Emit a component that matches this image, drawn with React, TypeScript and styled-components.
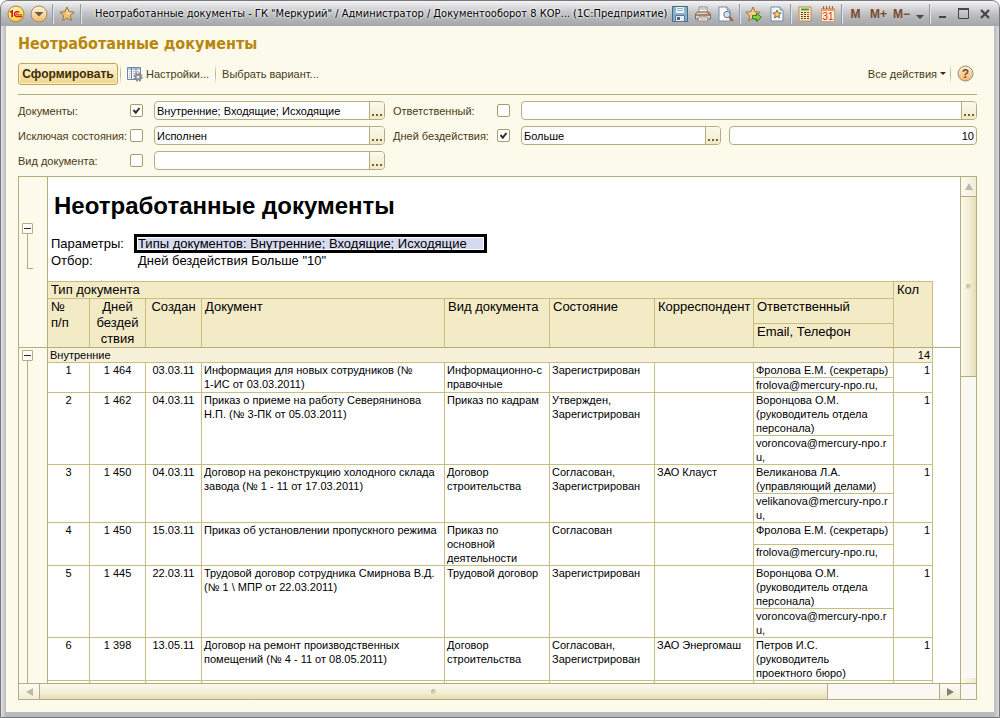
import React from "react";
import styled, { createGlobalStyle, css } from "styled-components";

const ui = '"Liberation Sans", Arial, sans-serif';
const tahoma = '"DejaVu Sans Condensed", "DejaVu Sans", Tahoma, sans-serif';

const color = {
  page: "#fcfaeb",
  line: "#b5ac80",
  grid: "#c9bd80",
  head: "#f3ebc6",
  group: "#f7f1da",
  label: "#4a3a12",
};

const GlobalStyle = createGlobalStyle`
  *, *::before, *::after { box-sizing: border-box; }
  body { margin: 0; background: #fff; font-family: ${ui}; font-size: 11px; color: #000; }
  button, input { font: inherit; color: inherit; margin: 0; }
  h1, h2 { margin: 0; }
`;

/* ---------- window frame ---------- */

const Window = styled.div`
  display: flex;
  flex-direction: column;
  height: 100vh;
  min-height: 480px;
  padding: 0 5px 5px;
  border: 1px solid #77787b;
  border-radius: 8px 8px 0 0;
  background: linear-gradient(90deg, #e2e2e4, #b9babd 5px, #b9babd calc(100% - 5px), #d8d8da);
  overflow: hidden;
`;

const TitleBar = styled.header`
  display: flex;
  flex: none;
  align-items: center;
  height: 25px;
  margin: 0 -5px;
  padding: 0 4px 0 3px;
  background: linear-gradient(#f4f4f5, #dcdcde 6px, #c3c4c6 12px, #b2b3b6 18px, #a6a7aa);
`;

const TitleText = styled.div`
  flex: 1;
  min-width: 0;
  padding-left: 12px;
  overflow: hidden;
  white-space: nowrap;
  font-family: ${tahoma};
  font-size: 11px;
  line-height: 16px;
  text-shadow: 0 0 3px #fff, 0 0 3px #fff;
`;

const BarButton = styled.button<{ $w?: number }>`
  display: flex;
  flex: none;
  align-items: center;
  justify-content: center;
  width: ${(p) => p.$w ?? 23}px;
  height: 22px;
  padding: 0;
  border: 0;
  background: none;
  font-weight: bold;
  font-size: 12px;
  color: #7a4a2a;
  svg { display: block; }
`;

const BarDivider = styled.span`
  flex: none;
  width: 5px;
  height: 20px;
  background: linear-gradient(90deg, transparent 2px, #97989b 2px, #97989b 3px, #e4e4e6 3px, #e4e4e6 4px, transparent 4px);
`;

const Content = styled.main`
  display: flex;
  flex: 1;
  flex-direction: column;
  min-height: 0;
  padding: 8px 17px 12px 12px;
  background: ${color.page};
`;

const PageTitle = styled.h1`
  font-family: ${tahoma};
  font-size: 16px;
  line-height: 20px;
  color: #b8860b;
`;

/* ---------- command bar ---------- */

const Toolbar = styled.div`
  display: flex;
  align-items: center;
  height: 41px;
  padding-bottom: 1px;
  border-bottom: 1px solid ${color.line};
  color: ${color.label};
`;

const PrimaryButton = styled.button`
  width: 100px;
  height: 22px;
  padding: 0;
  border: 1px solid #c8a452;
  border-radius: 3px;
  background: linear-gradient(#fdf6df, #f8e6b4 50%, #efd488);
  box-shadow: inset 0 0 0 1px #fbefcd;
  font-size: 12px;
  font-weight: bold;
  color: #3c2d08;
`;

const ToolButton = styled.button`
  display: flex;
  align-items: center;
  gap: 3px;
  height: 22px;
  padding: 0 6px;
  border: 0;
  background: none;
  white-space: nowrap;
`;

const ActionsButton = styled(ToolButton)`
  padding-right: 4px;
`;

const HelpButton = styled(ToolButton)`
  padding-right: 3px;
`;

const ToolDivider = styled.span<{ $gap?: number }>`
  width: 1px;
  height: 20px;
  margin-left: ${(p) => p.$gap ?? 0}px;
  background: linear-gradient(transparent, ${color.line}, transparent);
`;

const Spacer = styled.span`
  flex: 1;
`;

/* ---------- filters ---------- */

const Filters = styled.form`
  display: grid;
  grid-template-columns: 112px 24px minmax(0, 231fr) 112px 24px minmax(0, 456fr);
  grid-auto-rows: 19px;
  row-gap: 6px;
  align-items: center;
  margin: 6px 0;
`;

const FilterLabel = styled.label<{ $second?: boolean }>`
  padding-left: ${(p) => (p.$second ? 8 : 0)}px;
  white-space: nowrap;
  color: ${color.label};
`;

const CheckWrap = styled.span`
  display: grid;
  width: 13px;
  height: 13px;
  > * { grid-area: 1 / 1; }
  svg { pointer-events: none; visibility: hidden; }
  input:checked + svg { visibility: visible; }
`;

const CheckInput = styled.input`
  appearance: none;
  width: 13px;
  height: 13px;
  border: 1px solid #a79c6c;
  border-radius: 2px;
  background: #fff;
`;

const Field = styled.div`
  display: flex;
  height: 19px;
  border: 1px solid ${color.line};
  border-radius: 4px;
  background: #fff;
  overflow: hidden;
`;

const FieldInput = styled.input<{ $right?: boolean }>`
  flex: 1;
  min-width: 0;
  width: 100%;
  padding: 0 2px;
  border: 0;
  outline: 0;
  background: none;
  text-align: ${(p) => (p.$right ? "right" : "left")};
`;

const PickButton = styled.button`
  display: flex;
  flex: none;
  align-items: flex-end;
  justify-content: center;
  width: 15px;
  padding: 0 0 3px;
  border: 0;
  border-left: 1px solid ${color.line};
  background: linear-gradient(#fcfaee, #f0eacb);
`;

const FieldPair = styled.div`
  display: grid;
  grid-template-columns: minmax(0, 200fr) minmax(0, 248fr);
  gap: 8px;
`;

/* ---------- report ---------- */

const Report = styled.section`
  display: grid;
  flex: 1;
  grid-template-columns: minmax(0, 1fr) 16px;
  grid-template-rows: minmax(0, 1fr) 16px;
  min-height: 0;
  border: 1px solid ${color.line};
  background: #fff;
`;

const Panes = styled.div`
  display: flex;
  flex-direction: column;
  min-width: 0;
  min-height: 0;
  overflow: hidden;
`;

const Pane = styled.div<{ $fixed?: boolean }>`
  display: flex;
  flex: ${(p) => (p.$fixed ? "none" : "1")};
  min-height: 0;
  overflow: hidden;
  border-bottom: ${(p) => (p.$fixed ? `1px solid ${color.line}` : "0")};
`;

const Gutter = styled.div<{ $top: number }>`
  display: flex;
  flex: none;
  flex-direction: column;
  width: 29px;
  padding: ${(p) => p.$top}px 0 0 3px;
  border-right: 1px solid ${color.line};
  background: ${color.page};
`;

const FoldButton = styled.button`
  display: grid;
  place-items: center;
  flex: none;
  width: 11px;
  height: 11px;
  padding: 0;
  border: 1px solid ${color.line};
  border-radius: 1px;
  background: #fffef8;
`;

const FoldMark = styled.span`
  width: 7px;
  height: 1px;
  background: #3c2d08;
`;

const FoldLine = styled.span<{ $h?: number }>`
  width: 6px;
  margin-left: 5px;
  border-left: 1px solid ${color.line};
  ${(p) =>
    p.$h
      ? css`
          height: ${p.$h}px;
          border-bottom: 1px solid ${color.line};
        `
      : css`
          flex: 1;
        `}
`;

const Sheet = styled.div`
  flex: 1;
  min-width: 0;
  overflow: hidden;
`;

const SheetTitle = styled.h2`
  padding: 14px 0 0 6px;
  font-size: 24px;
  line-height: 30px;
`;

const Params = styled.dl`
  display: grid;
  grid-template-columns: 84px auto;
  justify-content: start;
  margin: 14px 0 12px;
  padding-left: 3px;
  font-size: 13px;
  line-height: 17px;
  white-space: nowrap;
  dt, dd { margin: 0; }
  dd { padding-left: 3px; }
`;

const SelectedCell = styled.dd`
  width: 351px;
  background: #d6daf0;
  box-shadow: 0 0 0 1px #000, inset 0 0 0 2px #000, inset 0 0 0 3px #fff;
`;

const Table = styled.table`
  width: 885px;
  table-layout: fixed;
  border-collapse: separate;
  border-spacing: 0;
  line-height: 14px;
`;

type CellProps = { $align?: "left" | "center" | "right"; $last?: boolean };

const HeadCell = styled.th<CellProps & { $h?: number }>`
  height: ${(p) => (p.$h ? `${p.$h}px` : "auto")};
  padding: 0 3px;
  border: solid ${color.grid};
  border-width: 0 1px ${(p) => (p.$last ? 0 : 1)}px 0;
  background: ${color.head};
  font-size: 13px;
  font-weight: normal;
  line-height: 16px;
  text-align: ${(p) => p.$align ?? "left"};
  vertical-align: top;
  white-space: pre;
`;

const HeadTable = styled(Table)`
  border-top: 1px solid ${color.grid};
`;

const Cell = styled.td<CellProps>`
  height: 15px;
  padding: 0 2px;
  border: solid ${color.grid};
  border-width: 0 1px 1px 0;
  text-align: ${(p) => p.$align ?? "left"};
  vertical-align: top;
  white-space: pre;
`;

const GroupCell = styled(Cell)`
  background: ${color.group};
`;

/* ---------- scroll bars ---------- */

const VBar = styled.div`
  display: flex;
  flex-direction: column;
  border-left: 1px solid ${color.line};
  background: #faf8f3;
`;

const HBar = styled.div`
  display: flex;
  border-top: 1px solid ${color.line};
  background: #faf8f3;
`;

const BarCorner = styled.div`
  border: solid ${color.line};
  border-width: 1px 0 0 1px;
  background: #faf8f3;
`;

const vFill = "linear-gradient(90deg, #fbf9ec, #f2edd2 60%, #e3dcb6)";
const hFill = "linear-gradient(#fbf9ec, #f2edd2 60%, #e3dcb6)";

const VStep = styled.button`
  display: grid;
  place-items: center;
  flex: none;
  height: 20px;
  padding: 0;
  border: 0;
  border-bottom: 1px solid ${color.line};
  background: linear-gradient(90deg, #fdfcf4, #f0ecd6);
`;

const VEnd = styled.span`
  flex: none;
  height: 5px;
  background: linear-gradient(90deg, #faf8ec, #efe9cd);
`;

const VThumb = styled.div`
  display: grid;
  place-items: center;
  flex: 179 0 0;
  border-bottom: 1px solid ${color.line};
  background: ${vFill};
`;

const HStep = styled.button<{ $end?: boolean }>`
  display: grid;
  place-items: center;
  flex: none;
  width: 21px;
  padding: 0;
  border: solid ${color.line};
  border-width: ${(p) => (p.$end ? "0 0 0 1px" : "0 1px 0 0")};
  background: linear-gradient(#fdfcf4, #f0ecd6);
`;

const HThumb = styled.div`
  display: grid;
  place-items: center;
  flex: 788 0 0;
  border-right: 1px solid ${color.line};
  background: ${hFill};
`;

const Track = styled.div<{ $grow: number }>`
  flex: ${(p) => p.$grow} 0 0;
`;

const Grip = styled.span`
  width: 5px;
  height: 5px;
  border-radius: 3px;
  background: linear-gradient(135deg, #b5ad88, #efe9cd);
`;

/* ---------- icons ---------- */

const STAR = "M8 1l2.1 4.7 5 .5-3.8 3.4 1.1 5L8 12l-4.4 2.6 1.1-5L.9 6.2l5-.5z";

const LogoIcon = () => (
  <svg width="18" height="18" viewBox="0 0 18 18">
    <defs>
      <radialGradient id="logo" cx=".4" cy=".3" r=".8">
        <stop offset="0" stopColor="#fffbd0" />
        <stop offset=".6" stopColor="#fbe25a" />
        <stop offset="1" stopColor="#e0a81c" />
      </radialGradient>
    </defs>
    <circle cx="9" cy="9" r="8" fill="url(#logo)" stroke="#a98a3e" />
    <path d="M3 7.300L5.200 6v6.200" fill="none" stroke="#d8171b" strokeWidth="1.700" />
    <path d="M12.300 7.600A2.600 2.600 0 1 0 9.800 11.600H15" fill="none" stroke="#d8171b" strokeWidth="1.500" />
    <path d="M10.800 8.300a.9.9 0 1 0-.8 1.500H15" fill="none" stroke="#d8171b" strokeWidth=".9" />
  </svg>
);

const MenuIcon = () => (
  <svg width="18" height="18" viewBox="0 0 18 18">
    <defs>
      <linearGradient id="menu" x2="0" y2="1">
        <stop offset="0" stopColor="#fdf3e2" />
        <stop offset=".5" stopColor="#f8d9a4" />
        <stop offset="1" stopColor="#f0b95c" />
      </linearGradient>
    </defs>
    <circle cx="9" cy="9" r="8" fill="url(#menu)" stroke="#a68a62" />
    <path d="M4.500 7h9L9 11.500z" fill="#6c5a44" />
  </svg>
);

const StarIcon = () => (
  <svg width="16" height="16" viewBox="0 0 16 16">
    <path d={STAR} fill="#f7c070" stroke="#8f7450" strokeLinejoin="round" />
    <path d="M8 3.500l1.300 3 3.200.4L8 8.500z" fill="#fde7bd" />
  </svg>
);

const SaveIcon = () => (
  <svg width="16" height="16" viewBox="0 0 16 16">
    <path d="M.5.500h15v15H.5z" fill="#8fb1c6" stroke="#42698a" />
    <path d="M4 1h8v6H4z" fill="#f2f6f9" />
    <path d="M5 2.500h6M5 4.500h6" stroke="#8fb0c6" />
    <path d="M3.500 9.500h9v6h-9z" fill="#e6eef3" stroke="#54799a" />
    <path d="M5 11h3v3H5z" fill="#42698a" />
  </svg>
);

const PrintIcon = () => (
  <svg width="16" height="16" viewBox="0 0 16 16">
    <path d="M4 1h8v5H4z" fill="#fff" stroke="#8b8b8b" />
    <path d="M2 6h12l1.500 2v5H.5V8z" fill="#d9d2c8" stroke="#77706a" />
    <path d="M1 9h14" stroke="#9a6a4a" strokeWidth="1.500" />
    <path d="M4 11h8l1 4H3z" fill="#fdfdfd" stroke="#8b8b8b" />
    <path d="M5 3h6M5 13h6" stroke="#bf8c68" />
    <path d="M12.500 7.500h1.500" stroke="#cc3a2a" />
  </svg>
);

const PreviewIcon = () => (
  <svg width="16" height="16" viewBox="0 0 16 16">
    <path d="M1 1h8l3 3v11H1z" fill="#fbfdff" stroke="#6f8fa8" />
    <path d="M9 1v3h3" fill="#cfdde8" stroke="#6f8fa8" />
    <circle cx="9" cy="8.500" r="3.200" fill="#cfe4f4" stroke="#7a6a62" />
    <path d="M11.300 11l3.500 4" stroke="#a4623a" strokeWidth="2.200" />
  </svg>
);

const AddFavoriteIcon = () => (
  <svg width="17" height="16" viewBox="0 0 17 16">
    <path d={STAR} fill="#f9cd85" stroke="#94764a" strokeLinejoin="round" />
    <path d="M7.500 9.500h4v-2.500l5 4.300-5 4.200V13h-4z" fill="#7fd03c" stroke="#3d7a1e" />
  </svg>
);

const FavoritesIcon = () => (
  <svg width="14" height="16" viewBox="0 0 14 16">
    <path d="M1 1h9l3 3v11H1z" fill="#f3f8fb" stroke="#6f8fa8" />
    <path d="M10 1v3h3" fill="#cfdde8" stroke="#6f8fa8" />
    <path d="M7 4l1.200 2.700 3 .3-2.300 2 .7 2.900L7 10.400l-2.600 1.500.7-2.900-2.300-2 3-.3z" fill="#f5c878" stroke="#7a5c34" strokeWidth=".9" />
  </svg>
);

const CalcIcon = () => (
  <svg width="14" height="16" viewBox="0 0 14 16">
    <path d="M1 1h12v14H1z" fill="#fbe9c0" stroke="#c08a4e" />
    <path d="M3 2.500h8v2H3z" fill="#4c9a35" />
    <path d="M3 6.500h2M6 6.500h2M3 8.500h2M6 8.500h2M3 10.500h2M6 10.500h2M3 12.500h2M6 12.500h2" stroke="#5a3a26" />
    <path d="M9 6.500h2M9 8.500h2" stroke="#cf3a22" />
    <path d="M9 10.500h2M9 12.500h2" stroke="#5a3a26" />
  </svg>
);

const CalendarIcon = () => (
  <svg width="14" height="16" viewBox="0 0 14 16">
    <path d="M.5 2.500h13v13H.5z" fill="#fdf0d6" stroke="#d8a060" />
    <path d="M1 2h12v3H1z" fill="#e8a068" />
    <path d="M2.500 0v3M5.500 0v3M8.500 0v3M11.500 0v3" stroke="#a9623a" />
    <text x="7" y="14" textAnchor="middle" fontFamily="Liberation Sans" fontWeight="normal" fontSize="10" fill="#d6281c">
      31
    </text>
  </svg>
);

const SettingsIcon = () => (
  <svg width="16" height="16" viewBox="0 0 16 16">
    <path d="M.5 1.500h13v12H.5z" fill="#fff" stroke="#6e87a3" />
    <path d="M1 2h12v2H1z" fill="#b4c6da" />
    <path d="M4.500 2v11M9 2v11" stroke="#6e87a3" />
    <path d="M2 5.500h1.500M2 7.500h1.500M2 9.500h1.500M2 11.500h1.500M6 5.500h2M6 7.500h2M10 5.500h2" stroke="#a9bace" />
    <circle cx="11" cy="11" r="3.600" fill="none" stroke="#85858c" strokeWidth="2.200" strokeDasharray="1.700 1.120" />
    <circle cx="11" cy="11" r="2.400" fill="#e4e4e8" stroke="#8c8c93" strokeWidth="1.600" />
  </svg>
);

const HelpIcon = () => (
  <svg width="17" height="17" viewBox="0 0 17 17">
    <defs>
      <linearGradient id="help" x2="0" y2="1">
        <stop offset="0" stopColor="#fdf0dc" />
        <stop offset="1" stopColor="#f3b668" />
      </linearGradient>
    </defs>
    <circle cx="8.500" cy="8.500" r="7.500" fill="url(#help)" stroke="#9c8a74" />
    <text x="8.500" y="13" textAnchor="middle" fontFamily="Liberation Sans" fontWeight="bold" fontSize="12" fill="#75492a">
      ?
    </text>
  </svg>
);

const Triangle = ({ d, fill = "#3c2d08", w, h }: { d: string; fill?: string; w: number; h: number }) => (
  <svg width={w} height={h} viewBox={`0 0 ${w} ${h}`}>
    <path d={d} fill={fill} />
  </svg>
);

const Dots = () => (
  <svg width="10" height="2" viewBox="0 0 10 2">
    <path d="M0 0h2v2H0zM4 0h2v2H4zM8 0h2v2H8z" fill="#7a651c" />
  </svg>
);

/* ---------- data ---------- */

const COLUMNS = [42, 56, 56, 243, 105, 105, 99, 140, 39];

type Doc = {
  n: string;
  days: string;
  created: string;
  title: string;
  kind: string;
  state: string;
  partner?: string;
  owner: string;
  email?: string;
};

const DOCS: Doc[] = [
  { n: "1", days: "1 464", created: "03.03.11", title: "Информация для новых сотрудников (№\n1-ИС от 03.03.2011)", kind: "Информационно-с\nправочные", state: "Зарегистрирован", owner: "Фролова Е.М. (секретарь)", email: "frolova@mercury-npo.ru," },
  { n: "2", days: "1 462", created: "04.03.11", title: "Приказ о приеме на работу Северянинова\nН.П. (№ 3-ПК от 05.03.2011)", kind: "Приказ по кадрам", state: "Утвержден,\nЗарегистрирован", owner: "Воронцова О.М.\n(руководитель отдела\nперсонала)", email: "voroncova@mercury-npo.r\nu," },
  { n: "3", days: "1 450", created: "04.03.11", title: "Договор на реконструкцию холодного склада\nзавода (№ 1 - 11 от 17.03.2011)", kind: "Договор\nстроительства", state: "Согласован,\nЗарегистрирован", partner: "ЗАО Клауст", owner: "Великанова Л.А.\n(управляющий делами)", email: "velikanova@mercury-npo.r\nu," },
  { n: "4", days: "1 450", created: "15.03.11", title: "Приказ об установлении пропускного режима", kind: "Приказ по\nосновной\nдеятельности", state: "Согласован", owner: "Фролова Е.М. (секретарь)", email: "frolova@mercury-npo.ru," },
  { n: "5", days: "1 445", created: "22.03.11", title: "Трудовой договор сотрудника Смирнова В.Д.\n(№ 1 \\ МПР от 22.03.2011)", kind: "Трудовой договор", state: "Зарегистрирован", owner: "Воронцова О.М.\n(руководитель отдела\nперсонала)", email: "voroncova@mercury-npo.r\nu," },
  { n: "6", days: "1 398", created: "13.05.11", title: "Договор на ремонт производственных\nпомещений (№ 4 - 11 от 08.05.2011)", kind: "Договор\nстроительства", state: "Согласован,\nЗарегистрирован", partner: "ЗАО Энергомаш", owner: "Петров И.С.\n(руководитель\nпроектного бюро)" },
];

const Columns = () => (
  <colgroup>
    {COLUMNS.map((w, i) => (
      <col key={i} width={w} />
    ))}
  </colgroup>
);

const Check = ({ id, checked = false }: { id: string; checked?: boolean }) => (
  <CheckWrap>
    <CheckInput type="checkbox" id={id} defaultChecked={checked} />
    <svg width="13" height="13" viewBox="0 0 13 13">
      <path d="M3.500 6l2.300 2.700L9.500 4" fill="none" stroke="#33302a" strokeWidth="2" />
    </svg>
  </CheckWrap>
);

const PickField = ({ label, value = "" }: { label: string; value?: string }) => (
  <Field>
    <FieldInput type="text" aria-label={label} defaultValue={value} />
    <PickButton type="button" aria-label={`Выбрать: ${label}`}>
      <Dots />
    </PickButton>
  </Field>
);

const DocRows = ({ doc }: { doc: Doc }) => {
  const span = doc.email ? 2 : 1;
  return (
    <>
      <tr>
        <Cell rowSpan={span} $align="center">{doc.n}</Cell>
        <Cell rowSpan={span} $align="center">{doc.days}</Cell>
        <Cell rowSpan={span} $align="center">{doc.created}</Cell>
        <Cell rowSpan={span}>{doc.title}</Cell>
        <Cell rowSpan={span}>{doc.kind}</Cell>
        <Cell rowSpan={span}>{doc.state}</Cell>
        <Cell rowSpan={span}>{doc.partner}</Cell>
        <Cell>{doc.owner}</Cell>
        <Cell rowSpan={span} $align="right">1</Cell>
      </tr>
      {doc.email && (
        <tr>
          <Cell>{doc.email}</Cell>
        </tr>
      )}
    </>
  );
};

export default function App() {
  return (
    <>
      <GlobalStyle />
      <Window>
        <TitleBar>
          <BarButton aria-label="1С"><LogoIcon /></BarButton>
          <BarButton aria-label="Меню"><MenuIcon /></BarButton>
          <BarDivider />
          <BarButton aria-label="Избранное"><StarIcon /></BarButton>
          <BarDivider />
          <TitleText>Неотработанные документы - ГК "Меркурий" / Администратор / Документооборот 8 КОР... (1С:Предприятие)</TitleText>
          <BarButton aria-label="Сохранить"><SaveIcon /></BarButton>
          <BarButton aria-label="Печать"><PrintIcon /></BarButton>
          <BarButton aria-label="Просмотр"><PreviewIcon /></BarButton>
          <BarDivider />
          <BarButton aria-label="Добавить в избранное"><AddFavoriteIcon /></BarButton>
          <BarButton aria-label="Список избранного"><FavoritesIcon /></BarButton>
          <BarDivider />
          <BarButton aria-label="Калькулятор"><CalcIcon /></BarButton>
          <BarButton aria-label="Календарь"><CalendarIcon /></BarButton>
          <BarDivider />
          <BarButton>M</BarButton>
          <BarButton>M+</BarButton>
          <BarButton>M−</BarButton>
          <BarButton $w={14} aria-label="Ещё">
            <svg width="8" height="12" viewBox="0 0 8 12"><path d="M0 7h8L4 11z" fill="#444547" /></svg>
          </BarButton>
          <BarDivider />
          <BarButton $w={21} aria-label="Свернуть">
            <svg width="11" height="11" viewBox="0 0 11 11"><path d="M2 8h7v2H2z" fill="#444547" /></svg>
          </BarButton>
          <BarButton $w={21} aria-label="Развернуть">
            <svg width="11" height="11" viewBox="0 0 11 11"><path d="M.5 1.500h10v9H.5z" fill="none" stroke="#444547" /><path d="M0 1h11" stroke="#444547" strokeWidth="2" /></svg>
          </BarButton>
          <BarButton $w={21} aria-label="Закрыть">
            <svg width="10" height="10" viewBox="0 0 10 10"><path d="M1 1l8 8M9 1l-8 8" stroke="#444547" strokeWidth="2.200" /></svg>
          </BarButton>
        </TitleBar>

        <Content>
          <PageTitle>Неотработанные документы</PageTitle>
          <Toolbar>
            <PrimaryButton>Сформировать</PrimaryButton>
            <ToolDivider $gap={2} />
            <ToolButton><SettingsIcon />Настройки...</ToolButton>
            <ToolDivider />
            <ToolButton>Выбрать вариант...</ToolButton>
            <Spacer />
            <ActionsButton>Все действия <Triangle d="M0 0h6L3 3z" w={6} h={3} /></ActionsButton>
            <ToolDivider />
            <HelpButton aria-label="Справка"><HelpIcon /></HelpButton>
          </Toolbar>

          <Filters>
            <FilterLabel htmlFor="f-docs">Документы:</FilterLabel>
            <Check id="f-docs" checked />
            <PickField label="Документы" value="Внутренние; Входящие; Исходящие" />
            <FilterLabel htmlFor="f-owner" $second>Ответственный:</FilterLabel>
            <Check id="f-owner" />
            <PickField label="Ответственный" />

            <FilterLabel htmlFor="f-state">Исключая состояния:</FilterLabel>
            <Check id="f-state" />
            <PickField label="Исключая состояния" value="Исполнен" />
            <FilterLabel htmlFor="f-idle" $second>Дней бездействия:</FilterLabel>
            <Check id="f-idle" checked />
            <FieldPair>
              <PickField label="Дней бездействия" value="Больше" />
              <Field>
                <FieldInput type="text" aria-label="Количество дней" defaultValue="10" $right />
              </Field>
            </FieldPair>

            <FilterLabel htmlFor="f-kind">Вид документа:</FilterLabel>
            <Check id="f-kind" />
            <PickField label="Вид документа" />
          </Filters>

          <Report>
            <Panes>
              <Pane $fixed>
                <Gutter $top={46}>
                  <FoldButton aria-label="Свернуть"><FoldMark /></FoldButton>
                  <FoldLine $h={35} />
                </Gutter>
                <Sheet>
                  <SheetTitle>Неотработанные документы</SheetTitle>
                  <Params>
                    <dt>Параметры:</dt>
                    <SelectedCell>Типы документов: Внутренние; Входящие; Исходящие</SelectedCell>
                    <dt>Отбор:</dt>
                    <dd>Дней бездействия Больше "10"</dd>
                  </Params>
                  <HeadTable>
                    <Columns />
                    <thead>
                      <tr>
                        <HeadCell colSpan={8} $h={17}>Тип документа</HeadCell>
                        <HeadCell rowSpan={3} $last>Кол</HeadCell>
                      </tr>
                      <tr>
                        <HeadCell rowSpan={2} $last>{"№\nп/п"}</HeadCell>
                        <HeadCell rowSpan={2} $last $align="center">{"Дней\nбездей\nствия"}</HeadCell>
                        <HeadCell rowSpan={2} $last $align="center">Создан</HeadCell>
                        <HeadCell rowSpan={2} $last>Документ</HeadCell>
                        <HeadCell rowSpan={2} $last>Вид документа</HeadCell>
                        <HeadCell rowSpan={2} $last>Состояние</HeadCell>
                        <HeadCell rowSpan={2} $last>Корреспондент</HeadCell>
                        <HeadCell $h={25}>Ответственный</HeadCell>
                      </tr>
                      <tr>
                        <HeadCell $h={23} $last>Email, Телефон</HeadCell>
                      </tr>
                    </thead>
                  </HeadTable>
                </Sheet>
              </Pane>
              <Pane>
                <Gutter $top={2}>
                  <FoldButton aria-label="Свернуть"><FoldMark /></FoldButton>
                  <FoldLine />
                </Gutter>
                <Sheet>
                  <Table>
                    <Columns />
                    <tbody>
                      <tr>
                        <GroupCell colSpan={8}>Внутренние</GroupCell>
                        <GroupCell $align="right">14</GroupCell>
                      </tr>
                      {DOCS.map((doc) => (
                        <DocRows key={doc.n} doc={doc} />
                      ))}
                      <tr>
                        {COLUMNS.map((_, i) => (
                          <Cell key={i} />
                        ))}
                      </tr>
                    </tbody>
                  </Table>
                </Sheet>
              </Pane>
            </Panes>
            <VBar>
              <VStep aria-label="Вверх"><Triangle d="M4 0l4 7H0z" fill="#bdb9a8" w={8} h={7} /></VStep>
              <VThumb><Grip /></VThumb>
              <Track $grow={302} />
              <VEnd />
            </VBar>
            <HBar>
              <HStep aria-label="Влево"><Triangle d="M7 0v8L0 4z" fill="#bdb9a8" w={7} h={8} /></HStep>
              <HThumb><Grip /></HThumb>
              <Track $grow={111} />
              <HStep $end aria-label="Вправо"><Triangle d="M0 0v8l7-4z" fill="#85816f" w={7} h={8} /></HStep>
            </HBar>
            <BarCorner />
          </Report>
        </Content>
      </Window>
    </>
  );
}
